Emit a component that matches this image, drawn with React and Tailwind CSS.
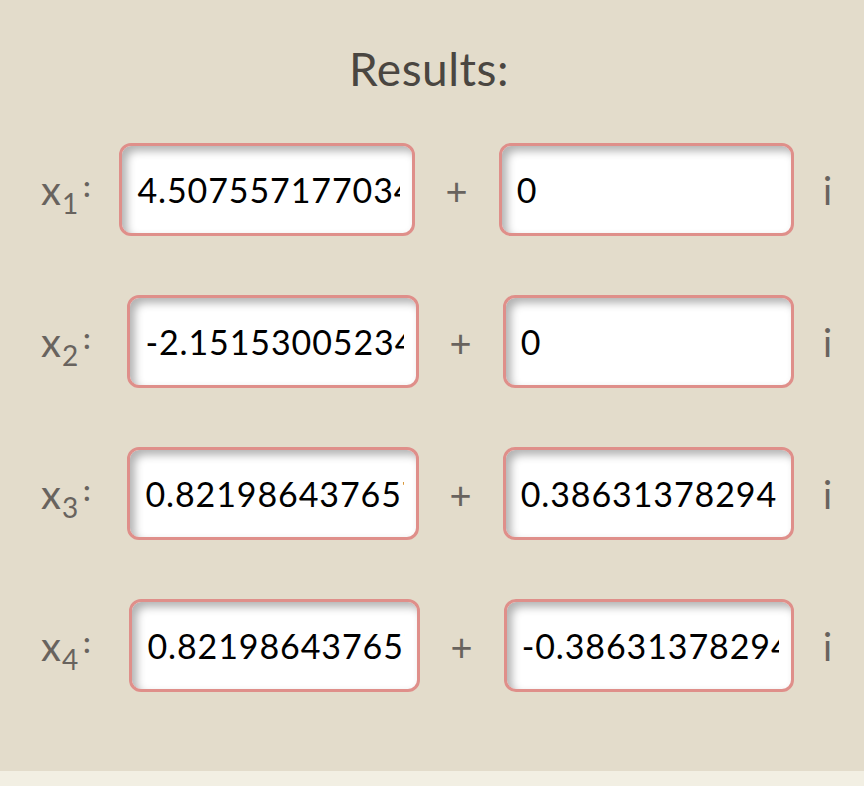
import React from "react";

const rows = [
  { n: "1", re: "4.507557177034", im: "0", gap: "mr-[29px]" },
  { n: "2", re: "-2.151530052349", im: "0", gap: "mr-[37px]" },
  { n: "3", re: "0.821986437657", im: "0.386313782941", gap: "mr-[37px]" },
  { n: "4", re: "0.821986437657", im: "-0.386313782941", gap: "mr-[39px]" },
];

const Field = ({ value }) => (
  <input
    readOnly
    value={value}
    className="min-w-0 flex-1 h-[93px] rounded-[12px] border-[3px] border-[#df8f8a] bg-white pl-[15px] pr-[12px] text-[34px] text-black outline-none shadow-[inset_5px_5px_9px_rgba(0,0,0,0.3)] tracking-[0.9px]"
    style={{ fontFamily: "Lato, 'Liberation Sans', sans-serif" }}
  />
);

export default function App() {
  return (
    <div
      className="min-h-[786px] flex flex-col bg-[#e3dccb]"
      style={{ fontFamily: "Lato, 'Liberation Sans', sans-serif" }}
    >
      <div className="flex-1 pt-[40px]">
        <h2 className="text-center text-[46px] leading-[58px] text-[#4a4641] pr-[6px] tracking-[0.5px]">
          Results:
        </h2>
        <div className="mt-[45px] flex flex-col gap-[59px] pl-[41px] pr-[32px]">
          {rows.map((r) => (
            <div key={r.n} className="flex items-center">
              <div className={`flex items-baseline text-[#68635e] text-[40px] leading-none ${r.gap}`}>
                <span>x</span>
                <span className="text-[28px] relative top-[9px] ml-[1px]">{r.n}</span>
                <span className="text-[28px] ml-[5px] relative -top-[8px] font-bold">:</span>
              </div>
              <Field value={r.re} />
              <span className="mx-[31px] text-[38px] text-[#68635e] leading-none">+</span>
              <Field value={r.im} />
              <span className="ml-[29px] text-[38px] text-[#68635e] leading-none">i</span>
            </div>
          ))}
        </div>
      </div>
      <div className="h-[15px] bg-[#f2efe3]" />
    </div>
  );
}
